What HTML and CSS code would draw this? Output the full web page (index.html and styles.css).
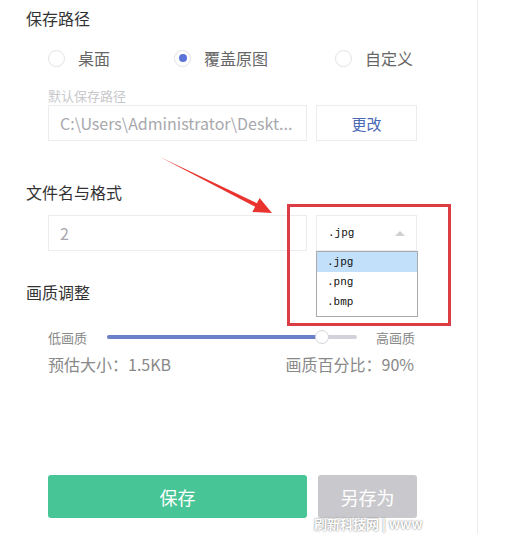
FILE: index.html
```html
<!DOCTYPE html>
<html lang="zh-CN">
<head>
    <meta charset="UTF-8">
    <title>保存设置</title>
    <link rel="stylesheet" href="styles.css">
</head>
<body>
    <div class="panel">
        <!-- 保存路径 -->
        <h3 class="title">保存路径</h3>
        <div class="radios">
            <label class="radio"><span class="dot"></span>桌面</label>
            <label class="radio checked"><span class="dot"></span>覆盖原图</label>
            <label class="radio"><span class="dot"></span>自定义</label>
        </div>
        <div class="hint">默认保存路径</div>
        <div class="row">
            <div class="field path">C:\Users\Administrator\Deskt...</div>
            <button class="btn-change">更改</button>
        </div>

        <!-- 文件名与格式 -->
        <h3 class="title title-file">文件名与格式</h3>
        <div class="row">
            <div class="field name">2</div>
            <div class="select">
                <span>.jpg</span>
                <span class="caret"></span>
                <ul class="options">
                    <li class="on">.jpg</li>
                    <li>.png</li>
                    <li>.bmp</li>
                </ul>
            </div>
        </div>

        <!-- 画质调整 -->
        <h3 class="title title-quality">画质调整</h3>
        <div class="slider-row">
            <span class="small">低画质</span>
            <div class="track">
                <div class="fill" style="width: 86%"></div>
                <span class="thumb" style="left: 86%"></span>
            </div>
            <span class="small">高画质</span>
        </div>
        <div class="info">
            <span>预估大小：1.5KB</span>
            <span>画质百分比：90%</span>
        </div>

        <div class="actions">
            <button class="btn-save">保存</button>
            <button class="btn-saveas">另存为</button>
        </div>

        <!-- annotations -->
        <div class="mark-box"></div>
        <svg class="mark-arrow" width="524" height="534" viewBox="0 0 524 534">
            <polygon fill="#e8332f" points="160,157 256.9,203.2 259.6,197.9 272,213 252.4,212 255.1,206.8"/>
        </svg>
        <div class="watermark">刷新科技网 | www</div>
    </div>
</body>
</html>
```

FILE: styles.css
```css
* {
    margin: 0;
    padding: 0;
    box-sizing: border-box;
}

body {
    font-family: "Noto Sans CJK SC", "Noto Sans", sans-serif;
    background: #fff;
    width: 524px;
    height: 534px;
    overflow: hidden;
}

.panel {
    position: relative;
    width: 478px;
    height: 534px;
    border-right: 1px solid #eeeef0;
    padding: 7px 0 0 26px;
}

.title {
    font-size: 16px;
    font-weight: normal;
    color: #333;
    line-height: 22px;
}

/* radios */
.radios {
    display: flex;
    margin: 17px 0 0 22px;
    height: 24px;
    align-items: center;
}

.radio {
    display: flex;
    align-items: center;
    font-size: 16px;
    color: #666;
}

.radio:nth-child(1) { width: 126px; }
.radio:nth-child(2) { width: 161px; }

.dot {
    width: 17px;
    height: 17px;
    border: 1px solid #e2e2e6;
    border-radius: 50%;
    margin-right: 13px;
    display: flex;
    align-items: center;
    justify-content: center;
}

.checked .dot::after {
    content: "";
    width: 8px;
    height: 8px;
    border-radius: 50%;
    background: #5b72d8;
}

.hint {
    margin: 18px 0 0 22px;
    font-size: 13px;
    line-height: 16px;
    color: #c8c8cc;
}

.row {
    display: flex;
    gap: 9px;
    margin: 1px 0 0 22px;
    height: 36px;
}

.field {
    width: 259px;
    border: 1px solid #ececee;
    padding: 0 11px;
    font-size: 16px;
    line-height: 34px;
    color: #a8a8ad;
}

.btn-change {
    width: 101px;
    background: #fff;
    border: 1px solid #ececee;
    font-family: inherit;
    font-size: 15px;
    color: #4a69b5;
}

.title-file {
    margin-top: 40px;
}

.title-file + .row {
    margin-top: 12px;
}

/* format select */
.select {
    position: relative;
    width: 101px;
    border: 1px solid #ececee;
    padding: 0 11px;
    display: flex;
    align-items: center;
    justify-content: space-between;
    font-family: "Liberation Mono", monospace;
    font-size: 11px;
    color: #111;
}

.caret {
    width: 0;
    height: 0;
    border-left: 5px solid transparent;
    border-right: 5px solid transparent;
    border-bottom: 5px solid #cfcfd3;
}

.options {
    position: absolute;
    left: -1px;
    top: 35px;
    width: 102px;
    list-style: none;
    background: #fff;
    border: 1px solid #a9aaae;
    padding-bottom: 4px;
    z-index: 2;
}

.options li {
    height: 20px;
    line-height: 20px;
    padding-left: 10px;
}

.options li.on {
    background: #c3e0fa;
}

.title-quality {
    margin-top: 30px;
}

/* slider */
.slider-row {
    display: flex;
    align-items: center;
    margin: 24px 0 0 22px;
    width: 370px;
    height: 20px;
}

.small {
    font-size: 13px;
    color: #888;
}

.track {
    position: relative;
    width: 250px;
    height: 4px;
    background: #d2d3da;
    border-radius: 2px;
    margin: 0 19px 0 20px;
}

.fill {
    height: 4px;
    background: #6b80c9;
    border-radius: 2px;
}

.thumb {
    position: absolute;
    top: -5px;
    width: 14px;
    height: 14px;
    margin-left: -7px;
    border-radius: 50%;
    background: #fff;
    border: 1px solid #d4d5dc;
}

.info {
    display: flex;
    justify-content: space-between;
    margin: 6px 0 0 22px;
    width: 366px;
    font-size: 16px;
    color: #888;
    line-height: 22px;
}

/* buttons */
.actions {
    display: flex;
    gap: 11px;
    margin: 100px 0 0 22px;
}

.actions button {
    height: 43px;
    border: none;
    border-radius: 3px;
    font-family: inherit;
    font-size: 18px;
    color: #fff;
}

.btn-save {
    width: 259px;
    background: #48c596;
}

.btn-saveas {
    width: 99px;
    background: #c9c9cd;
    color: #f1f1f3;
}

/* annotations */
.mark-box {
    position: absolute;
    left: 287px;
    top: 204px;
    width: 164px;
    height: 122px;
    border: 3px solid #dc3d45;
    z-index: 3;
}

.mark-arrow {
    position: absolute;
    left: 0;
    top: 0;
    z-index: 3;
}

.watermark {
    position: absolute;
    left: 314px;
    top: 516px;
    white-space: nowrap;
    font-size: 13px;
    line-height: 16px;
    font-weight: bold;
    color: #fff;
    text-shadow: 0 0 2px #666;
    z-index: 4;
}
```
